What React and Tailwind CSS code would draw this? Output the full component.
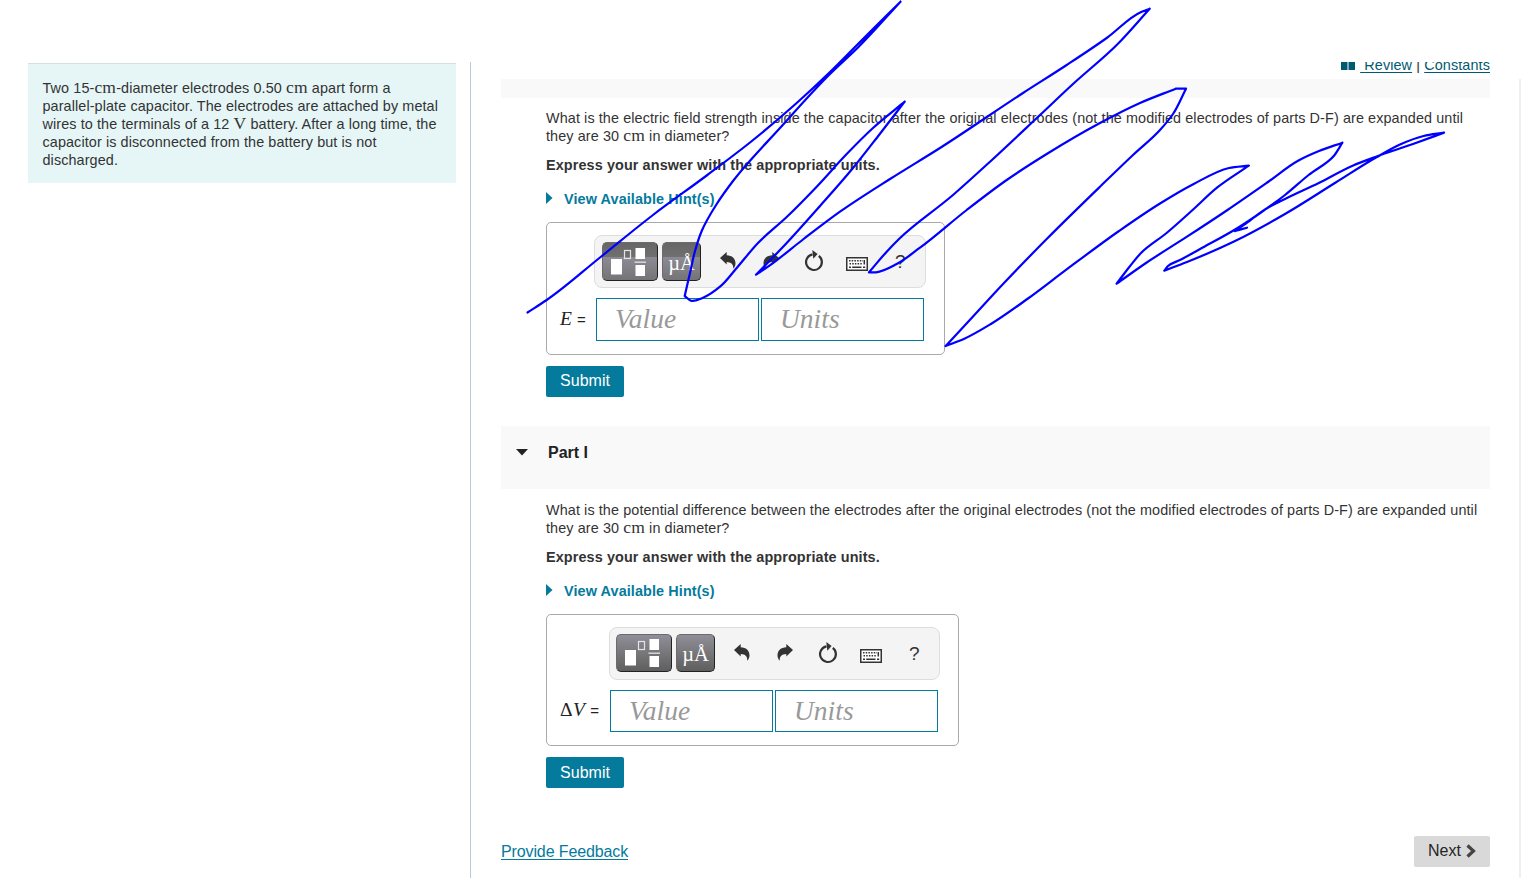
import React from "react";

const sans = "font-['Liberation_Sans',Arial,sans-serif]";
const serif = "font-['Liberation_Serif','Times_New_Roman',serif]";

const strokes = [
  [[527.5,312.5],[546.7,300],[600,257.5],[653,215],[706.7,175.5],[750,142.5],[796.7,103],[830,72],[857,45],[900.5,1.7]],
  [[900.5,1.7],[858,47.500],[830,74],[780,128],[733,181],[716.7,204],[701.7,231],[695,251],[690,273],[684.7,296]],
  [[684.7,296],[691,300.7],[703,297.7],[720,286.7],[736.7,268],[758,243],[786.7,217],[816.7,186.7],[846.7,154],[873,128],[904.7,101.7]],
  [[904.7,101.7],[880,133.7],[853,168],[820,206],[786.7,243],[756,274.7]],
  [[756,274.7],[768,266.7],[803,239.500],[840,211.7],[890,179],[940,148],[1023,93],[1066.7,65],[1106.7,38],[1141.7,11.7],[1149.7,8.7]],
  [[1149.7,8.7],[1116.7,45],[1073,84],[1040,115],[990,161.7],[953,195],[899,239],[886.7,251.7],[869,272.3]],
  [[869,272.3],[876,272.3],[896.7,264],[920,247.7],[966.7,210],[1006.7,180],[1046.7,154],[1100,123],[1140,103],[1175.7,88.7]],
  [[1175.7,88.7],[1186,88.7]],
  [[1186,88.7],[1173,114],[1160,130],[1133,155],[1100,186.7],[1046.7,239],[1004,283],[963.8,326.5],[945.6,346]],
  [[945.6,346],[963.8,339],[990.9,324],[1028,298.5],[1065,270.7],[1119,231],[1160,203.5],[1193.7,184],[1229,168],[1248.8,165.7]],
  [[1248.8,165.7],[1217,187.7],[1193.7,209],[1166.6,233],[1141,253],[1129.5,266.7],[1116.6,283.7]],
  [[1116.6,283.7],[1146,263],[1187,236.7],[1227.5,210],[1268,182],[1298.5,160.5],[1319,151],[1342.4,142.7]],
  [[1342.4,142.7],[1334,155.7],[1308.6,175],[1285,195],[1261,212.500],[1237.6,228],[1203.8,247],[1180,260],[1168,266],[1164.3,270.7]],
  [[1164.3,270.7],[1187,262],[1234,241.500],[1285,214],[1335.7,182.500],[1376,157.500],[1400,144.500],[1423.6,136],[1444,132.7]],
  [[1444,132.7],[1413,144],[1376,156.7],[1352.6,165.7],[1318.8,183],[1285,199],[1265,209.500],[1250,220.500],[1235,231]],
  [[1235,231],[1247,227.7]],
];

// Smooth curve through the sampled pen positions, with chord-length weighted tangents
function smooth(pts) {
  const n = pts.length;
  const len = [];
  const dir = [];
  for (let i = 0; i < n - 1; i++) {
    const dx = pts[i + 1][0] - pts[i][0];
    const dy = pts[i + 1][1] - pts[i][1];
    const l = Math.hypot(dx, dy);
    len.push(l);
    dir.push([dx / l, dy / l]);
  }
  const tan = pts.map((_, i) => {
    if (i === 0) return dir[0];
    if (i === n - 1) return dir[n - 2];
    const s = len[i - 1] + len[i];
    return [0, 1].map((k) => (dir[i - 1][k] * len[i] + dir[i][k] * len[i - 1]) / s);
  });
  let d = `M${pts[0][0]} ${pts[0][1]}`;
  for (let i = 0; i < n - 1; i++) {
    const h = len[i] / 3;
    const [p, q] = [pts[i], pts[i + 1]];
    d += `C${p[0] + tan[i][0] * h} ${p[1] + tan[i][1] * h} ${q[0] - tan[i + 1][0] * h} ${q[1] - tan[i + 1][1] * h} ${q[0]} ${q[1]}`;
  }
  return d;
}

function Ink() {
  return (
    <svg className="pointer-events-none absolute left-0 top-0" width="1521" height="878" viewBox="0 0 1521 878">
      <path d={strokes.map(smooth).join("")} fill="none" stroke="#0000ff" strokeWidth="2.2" strokeLinecap="round" strokeLinejoin="round" />
    </svg>
  );
}

function Unit({ children }) {
  return <span className={`${serif} text-[17.500px] leading-[0] tracking-[0.2px]`}>{children}</span>;
}

function TemplateIcon() {
  return (
    <svg width="38" height="32" viewBox="0 0 38 32" className="mr-[2px] shrink-0">
      <rect x="1" y="13" width="11" height="15.5" fill="#fff" />
      <rect x="14.5" y="4.500" width="6" height="8" fill="none" stroke="#e4e4e6" strokeWidth="1.2" />
      <rect x="25.500" y="2" width="9.500" height="11" fill="#fff" />
      <rect x="24.500" y="15.500" width="11.500" height="1.400" fill="#ddd" />
      <rect x="25.500" y="19" width="9.500" height="11" fill="#fff" />
    </svg>
  );
}

function UndoIcon({ flip }) {
  return (
    <svg width="16" height="18" viewBox="0 0 16 18" className={flip ? "-scale-x-100" : ""}>
      <path d="M0 6 6.700 0v3.200C12 3.300 15.500 6.500 15.500 11.300c0 2.300-.9 4.200-2.300 5.400.5-4-1.800-6.600-6.500-6.700V12.500z" fill="#333" />
    </svg>
  );
}

function ResetIcon() {
  return (
    <svg width="20" height="22" viewBox="0 0 20 22">
      <path d="M14.800 5.800A7.900 7.900 0 1 1 8.500 4.300" fill="none" stroke="#333" strokeWidth="2.200" />
      <path d="M8.300 0 13.600 4 9.300 8.700z" fill="#333" />
    </svg>
  );
}

function KeyboardIcon() {
  return (
    <svg width="22" height="14" viewBox="0 0 22 14">
      <rect x="0.750" y="0.750" width="20.500" height="12.500" fill="#fff" stroke="#333" strokeWidth="1.500" />
      <path d="M3 3.700h14M3.500 6.700h12.500" stroke="#333" strokeWidth="1.500" strokeDasharray="1.500 1.200" />
      <path d="M18.300 2.900v4.600M3 10.200h2M6.200 10.200h9.300M17 10.200h2.200" stroke="#333" strokeWidth="1.500" />
    </svg>
  );
}

function Toolbar({ first }) {
  const shade = first
    ? "h-[39px] bg-[linear-gradient(180deg,#666_0%,#707070_38%,#8c8b95_39%,#747476_100%)]"
    : "h-[38px] bg-[linear-gradient(180deg,#908f99_0%,#777679_50%,#5f5f5f_100%)]";
  const btn = `${shade} flex items-center justify-center rounded-[5px] border border-[#6b6b6b] border-r-[#222] border-b-[#222]`;
  return (
    <div className={`flex h-[53px] items-start rounded-[8px] border border-[#ddd] bg-[#f4f4f4] pt-[6px] ${first ? "w-[332px] pl-[7px]" : "w-[331px] pl-[6px]"}`}>
      <div className={`${btn} w-[56px]`}><TemplateIcon /></div>
      <div className={`${btn} ml-1 w-[39px]`}>
        <span className={`${serif} pt-[3px] text-[20.500px] leading-none text-white`}>µÅ</span>
      </div>
      <div className="ml-[19px] flex h-[37px] w-[190px] items-center">
        <div className="w-[43px]"><UndoIcon /></div>
        <div className="w-[41px]"><UndoIcon flip /></div>
        <div className="w-[42px]"><ResetIcon /></div>
        <div className="w-[49px] pt-[6px]"><KeyboardIcon /></div>
        <span className="pt-px text-[19px] leading-none text-[#333]">?</span>
      </div>
    </div>
  );
}

function Field({ label, first }) {
  return (
    <div className={`${serif} flex w-[163px] items-center border border-[#047a9c] bg-white pl-[18px] text-[27.500px] italic leading-none text-[#999] ${first ? "h-[43px] pb-[2px]" : "h-[42px] pb-px"}`}>
      {label}
    </div>
  );
}

function AnswerBox({ first }) {
  return (
    <div className={`flex flex-col rounded-[5px] border border-[#aaa] pt-3 ${first ? "h-[133px] w-[399px]" : "h-[132px] w-[413px]"}`}>
      <div className={first ? "pl-[47px]" : "pl-[62px]"}><Toolbar first={first} /></div>
      <div className="mt-[10px] flex items-center">
        <div className={`${serif} flex items-baseline whitespace-nowrap pb-[2px] pl-[13px] text-[19.500px] leading-none text-[#222] ${first ? "w-[49px]" : "w-[63px]"}`}>
          {first ? <i>E</i> : <span className="tracking-[0.4px]">Δ<i>V</i></span>}
          <span className={`${sans} ml-[5px] text-[15px]`}>=</span>
        </div>
        <div className="flex gap-[2px]">
          <Field label="Value" first={first} />
          <Field label="Units" first={first} />
        </div>
      </div>
    </div>
  );
}

function Question({ first }) {
  return (
    <div className="pl-[45px]">
      <p className="h-9 whitespace-nowrap text-[14.400px] leading-[18px] tracking-[0.1px]">
        What is the {first ? "electric field strength inside the capacitor" : "potential difference between the electrodes"} after the original electrodes (not the modified electrodes of parts D-F) are expanded until
        <br />
        they are 30 <Unit>cm</Unit> in diameter?
      </p>
      <p className="mt-[11px] text-[14.400px] font-bold leading-[18px] tracking-[0.11px]">Express your answer with the appropriate units.</p>
      <div className="mt-4 flex h-[18px] items-center text-[14.400px] font-bold leading-[18px] tracking-[0.11px] text-[#047a9c]">
        <svg width="7" height="12" viewBox="0 0 7 12" className="-mt-[2px] mr-[11px]"><path d="M0 0 6.500 6 0 12z" fill="#047a9c" /></svg>
        View Available Hint(s)
      </div>
      <div className="mt-[14px]"><AnswerBox first={first} /></div>
      <button className={`mt-[11px] flex h-[31px] w-[78px] items-center justify-center rounded-[2px] bg-[#047a9c] text-[16px] leading-none text-white ${first ? "pb-[2px]" : "pb-0"}`}>Submit</button>
    </div>
  );
}

export default function App() {
  return (
    <div className={`${sans} relative flex h-[878px] w-[1521px] overflow-hidden bg-white pt-[62px] text-[#333]`}>
      <aside className="w-[471px] border-r border-[#b8c9d9] pl-7 pt-px">
        <div className="h-[120px] w-[428px] border-t border-[#d5dfdf] bg-[#e6f6f7] pl-[14.500px] pt-[15px] text-[14.400px] leading-[18px] tracking-[0.1px]">
          <div className="h-[18px] whitespace-nowrap">Two 15-<Unit>cm</Unit>-diameter electrodes 0.50 <Unit>cm</Unit> apart form a</div>
          <div className="h-[18px] whitespace-nowrap">parallel-plate capacitor. The electrodes are attached by metal</div>
          <div className="h-[18px] whitespace-nowrap">wires to the terminals of a 12 <Unit>V</Unit> battery. After a long time, the</div>
          <div className="h-[18px] whitespace-nowrap">capacitor is disconnected from the battery but is not</div>
          <div className="h-[18px] whitespace-nowrap">discharged.</div>
        </div>
      </aside>
      <main className="ml-[30px] flex w-[989px] flex-col">
        <div className="h-[17px] overflow-hidden">
          <div className="-mt-[6px] flex h-[18px] items-center justify-end text-[14.400px] leading-[18px] tracking-[0.11px] text-[#005a70]">
            <svg width="14" height="18" viewBox="0 0 14 18" className="mr-[5px]"><path d="M0 6h6.500v8H0zM7.500 6H14v8H7.500z" fill="#005a70" /></svg>
            <span className="whitespace-pre underline underline-offset-2"> Review</span>
            <span className="whitespace-pre text-[#333]"> | </span>
            <span className="underline underline-offset-2">Constants</span>
          </div>
        </div>
        <div className="mb-[11px] h-[19px] bg-[#f9f9f9]" />
        <Question first />
        <div className="mt-[29px] flex h-[63px] items-start bg-[#f9f9f9] pl-[15px] pt-[18px] text-[16px] font-bold leading-[18px] text-[#222]">
          <svg width="12" height="7" viewBox="0 0 12 7" className="mr-5 mt-[5px]"><path d="M0 0h12L6 6.500z" fill="#222" /></svg>
          Part I
        </div>
        <div className="mt-3"><Question /></div>
        <div className="mt-12 flex h-[31px] items-center justify-between">
          <span className="text-[16px] tracking-[-0.12px] text-[#047a9c] underline underline-offset-2">Provide Feedback</span>
          <button className="flex h-[31px] w-[76px] items-center justify-center rounded-[2px] bg-[#d9d9d9] pb-[2px] text-[16px] leading-none text-[#252525]">
            Next
            <svg width="10" height="14" viewBox="0 0 10 14" className="ml-[5px]"><path d="M1.500 1.500 7.500 7l-6 5.500" fill="none" stroke="#444" strokeWidth="3.200" /></svg>
          </button>
        </div>
      </main>
      <div className="ml-[29px] mt-[17px] w-[2px] bg-[#f0f0f0]" />
      <Ink />
    </div>
  );
}
